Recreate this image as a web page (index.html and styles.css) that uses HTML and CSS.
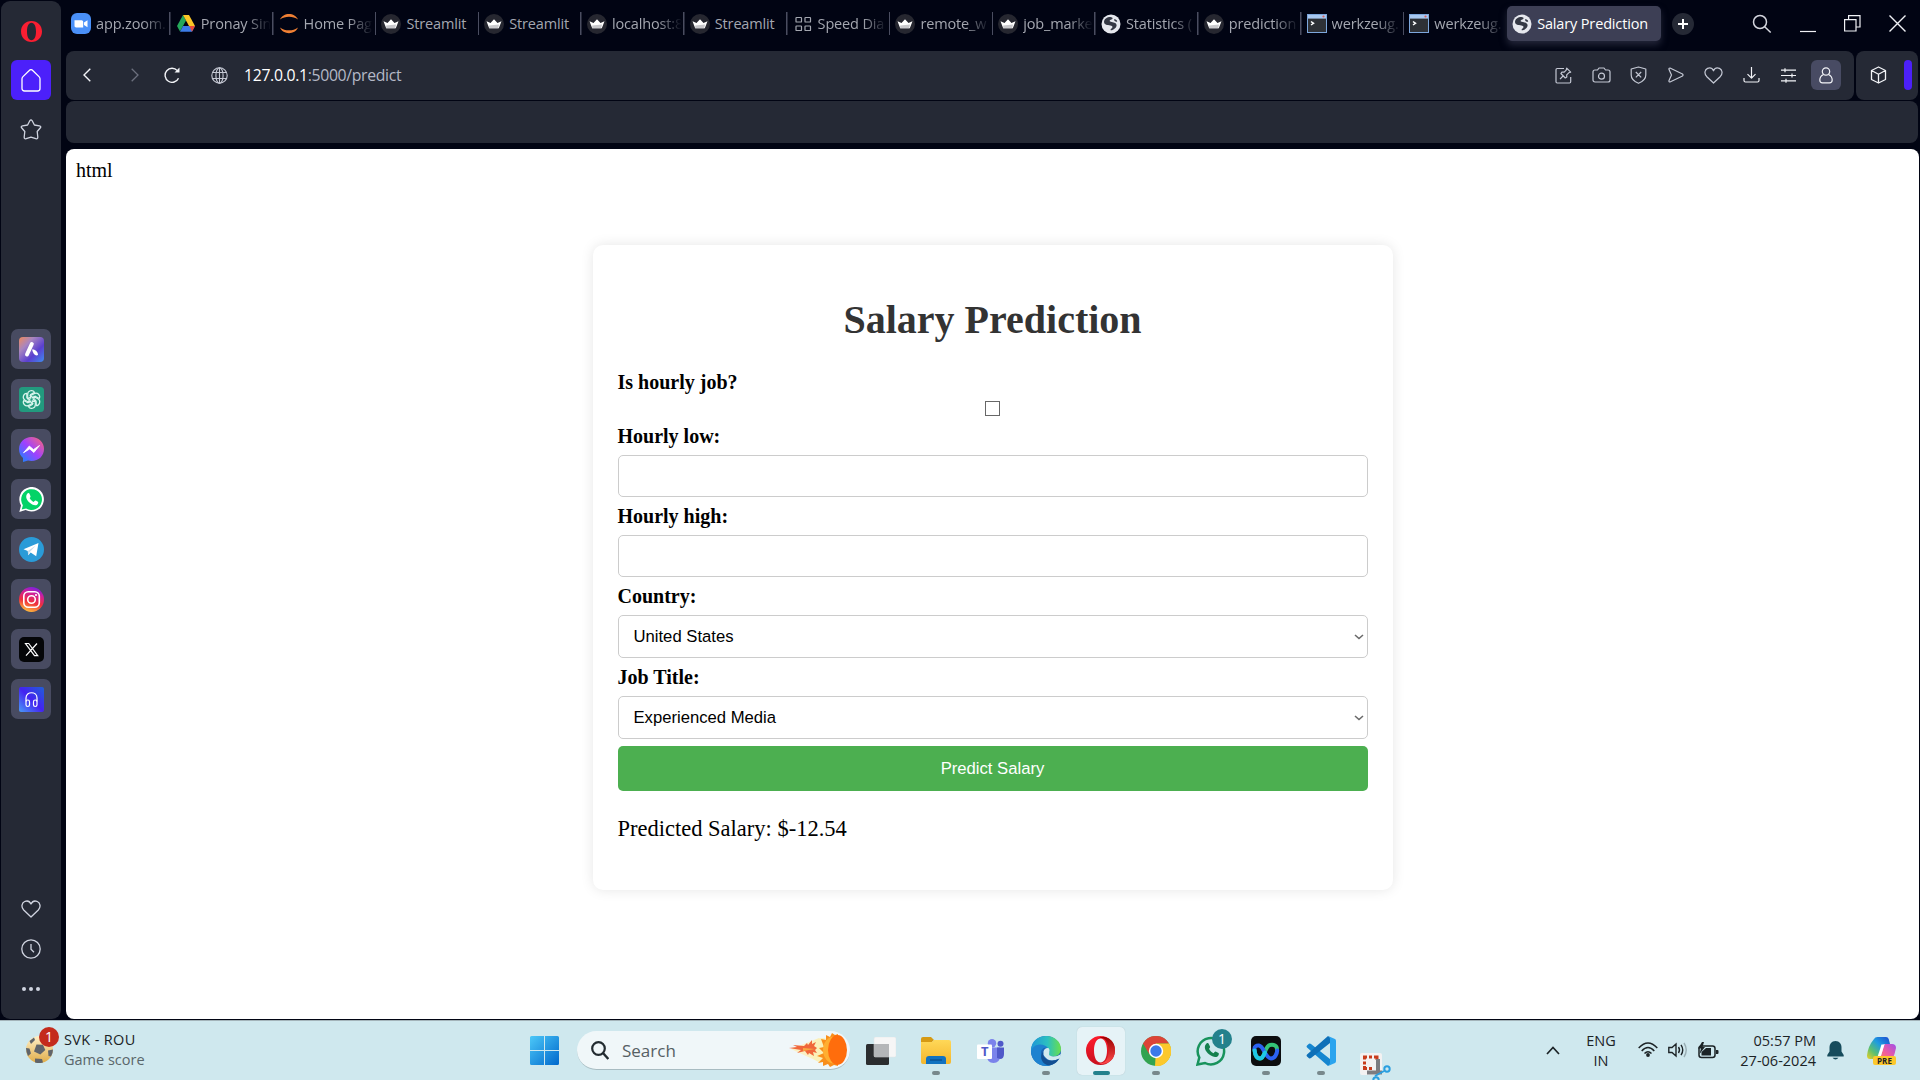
FILE: index.html
```html
<!DOCTYPE html>
<html lang="en">
<head>
<meta charset="utf-8">
<title>Salary Prediction</title>
<link rel="stylesheet" href="styles.css">
</head>
<body>
<svg class="defs" width="0" height="0" aria-hidden="true">
  <defs>
    <linearGradient id="g-aria" x1="0" y1="0" x2="1" y2="1"><stop offset="0" stop-color="#f08a5a"/><stop offset=".3" stop-color="#a886c0"/><stop offset=".65" stop-color="#5a3fd0"/><stop offset="1" stop-color="#3f8cf0"/></linearGradient>
    <linearGradient id="g-msg" x1="0" y1="1" x2="1" y2="0"><stop offset="0" stop-color="#0a8cff"/><stop offset=".5" stop-color="#a040ff"/><stop offset="1" stop-color="#ff6a70"/></linearGradient>
    <linearGradient id="g-insta" x1=".3" y1="1" x2=".6" y2="0"><stop offset="0" stop-color="#ffc63c"/><stop offset=".4" stop-color="#f0303c"/><stop offset=".75" stop-color="#d0209a"/><stop offset="1" stop-color="#7a20e0"/></linearGradient>
    <linearGradient id="g-head" x1="0" y1="1" x2="1" y2="0"><stop offset="0" stop-color="#4a9cf8"/><stop offset=".5" stop-color="#4422f0"/><stop offset="1" stop-color="#2060d8"/></linearGradient>
    <linearGradient id="g-win" x1="0" y1="0" x2="1" y2="1"><stop offset="0" stop-color="#4cc8f8"/><stop offset="1" stop-color="#0068cc"/></linearGradient>
    <linearGradient id="g-edge" x1="0" y1="0" x2="1" y2="0"><stop offset="0" stop-color="#1e96d8"/><stop offset=".55" stop-color="#2cc0c0"/><stop offset="1" stop-color="#6ae04c"/></linearGradient>
    <linearGradient id="g-folder" x1="0" y1="0" x2="0" y2="1"><stop offset="0" stop-color="#ffd858"/><stop offset="1" stop-color="#f4b62c"/></linearGradient>
    <linearGradient id="g-webex" x1="0" y1="0" x2="1" y2="0"><stop offset="0" stop-color="#20c4e8"/><stop offset=".5" stop-color="#2458f0"/><stop offset="1" stop-color="#3cd06c"/></linearGradient>
    <linearGradient id="g-cop1" x1="1" y1="0" x2="0" y2="1"><stop offset="0" stop-color="#1c48d0"/><stop offset=".4" stop-color="#1e9ce0"/><stop offset=".7" stop-color="#5cc070"/><stop offset="1" stop-color="#f0d020"/></linearGradient>
    <linearGradient id="g-cop2" x1="1" y1="0" x2="0" y2="1"><stop offset="0" stop-color="#a050e8"/><stop offset=".5" stop-color="#f05ca0"/><stop offset="1" stop-color="#ff9040"/></linearGradient>
    <linearGradient id="g-ball" x1="0" y1="0" x2="0" y2="1"><stop offset="0" stop-color="#fff0c8"/><stop offset="1" stop-color="#e0ac48"/></linearGradient>
    <linearGradient id="g-op" x1="0" y1="0" x2="0" y2="1"><stop offset="0" stop-color="#ff1b2d"/><stop offset="1" stop-color="#c8101e"/></linearGradient>
    <linearGradient id="g-op2" x1="0" y1="0" x2="0" y2="1"><stop offset="0" stop-color="#9c0000"/><stop offset="1" stop-color="#ff4b4b"/></linearGradient>
    <symbol id="crown" viewBox="0 0 20 20"><circle cx="10" cy="10" r="10" fill="#262730"/><path d="M2.500 7.200l4 1.800L10 5.200l3.500 3.800 4-1.800-2.700 7H5.200z" fill="#fff"/><path d="M5.200 11.500l9.800-1-.8 3.700h-9z" fill="#c8c8cc"/></symbol>
    <symbol id="world" viewBox="0 0 20 20"><circle cx="10" cy="10" r="9.500" fill="#e6e8ee"/><path d="M3 8c0-3 3-5 6.500-5 2.500.2 2.700 1.900.9 2.600-2 .7-2.500 1.600-.6 2.200 2.300.6 5.500.8 5.800 3.300.2 2.600-2.800 4.600-4.900 5.200-1.600.3-1.400-1.200-.2-1.900 1.300-.7 1.400-2.100-.2-2.700C8.100 11 3.300 11.500 3 8zM13 5.500c1.500-.6 3 .7 3.200 2-1 .8-3.400-.6-3.200-2z" fill="#343844"/></symbol>
    <symbol id="console" viewBox="0 0 20 19"><rect x=".5" y=".5" width="19" height="18" fill="#2e3136" stroke="#7da7dc"/><rect x="1" y="1" width="18" height="3.600" fill="#a8c8f0"/><circle cx="16.500" cy="2.500" r="1.100" fill="#d8605c"/><path d="M4 7.500l2.500 1.800L4 11" stroke="#fff" stroke-width="1.500" fill="none"/></symbol>
    <symbol id="heart" viewBox="0 0 20 18"><path d="M10 17L2.700 10C-.2 6.800.8 2.800 3.700 1.500 6.300.4 8.800 1.500 10 4c1.200-2.500 3.700-3.600 6.300-2.500 2.900 1.300 3.900 5.300 1 8.500z" fill="none" stroke="currentColor" stroke-width="1.300" stroke-linejoin="round"/></symbol>
  </defs>
</svg>

<div class="browser">
  <aside class="sidebar">
    <div class="side-logo"><svg width="21" height="21" viewBox="0 0 21 21"><path fill-rule="evenodd" fill="#fa1e32" d="M10.500 0C16.500 0 21 4.500 21 10.500S16.500 21 10.500 21 0 16.500 0 10.500 4.500 0 10.500 0zm0 1.800C7.500 1.800 6 5.500 6 10.500s1.500 8.700 4.500 8.700S15 15.500 15 10.500s-1.500-8.700-4.500-8.700z"/></svg></div>
    <div class="side-home"><svg width="20" height="23" viewBox="0 0 20 23"><path d="M1 9.800c0-1 .4-1.600 1-2.200l6.300-6.100c1-1 2.400-1 3.400 0L18 7.600c.6.600 1 1.200 1 2.200v9.700c0 1.500-1 2.500-2.500 2.500h-13C2 22 1 21 1 19.500z" fill="none" stroke="#fff" stroke-width="1.300"/></svg></div>
    <div class="side-star"><svg width="22" height="21" viewBox="0 0 22 21"><path d="M9.800 1.800q1.200-2 2.400 0l2.200 4.200 5 .8q2.300.5.8 2.200l-3 3.500.6 5.500q.1 2.300-2 1.700L11 18.200l-4.800 1.500q-2.100.6-2-1.700l.6-5.500-3-3.500Q.3 7.300 2.600 6.800l5-.8z" fill="none" stroke="#d0d4e0" stroke-width="1.300" stroke-linejoin="round"/></svg></div>
    <nav class="side-apps">
      <div class="app"><svg width="25" height="25" viewBox="0 0 25 25"><rect width="25" height="25" rx="4" fill="url(#g-aria)"/><path d="M12.800 7L8 17.500" stroke="#fff" stroke-width="4" stroke-linecap="round"/><path d="M13 12.500c3-.5 6 2 6 5.500-2.500 1.300-4.700-.5-6-5.500z" fill="#fff"/></svg></div>
      <div class="app"><svg width="25" height="25" viewBox="0 0 25 25"><rect width="25" height="25" rx="3.500" fill="#229a7e"/><g fill="none" stroke="#d8f4ec" stroke-width="1.200"><path id="petal" d="M12.500 9.500L8.700 11.700V7.300c0-4 5.200-4.800 6.800-2l-4 2.400v4"/><use href="#petal" transform="rotate(60 12.500 12.500)"/><use href="#petal" transform="rotate(120 12.500 12.500)"/><use href="#petal" transform="rotate(180 12.500 12.500)"/><use href="#petal" transform="rotate(240 12.500 12.500)"/><use href="#petal" transform="rotate(300 12.500 12.500)"/></g></svg></div>
      <div class="app"><svg width="25" height="25" viewBox="0 0 25 25"><path d="M12.500 0C19.500 0 25 5 25 12s-5.500 12-12.500 12c-1.300 0-2.500-.2-3.500-.5L4 25v-4C1.500 19 0 15.800 0 12 0 5 5.500 0 12.500 0z" fill="url(#g-msg)"/><path d="M4.500 15.800L10.300 9l4.200 3.600 6-4.100-5.600 7-4.200-3.600z" fill="#fff" stroke="#fff" stroke-width=".8"/></svg></div>
      <div class="app"><svg width="25" height="25" viewBox="0 0 25 25"><path d="M.3 25L2 18.500A12.300 12.300 0 1 1 6.600 23z" fill="#fff"/><path d="M2.700 22.600l1.200-4.300a10.400 10.400 0 1 1 3.200 3.100z" fill="#04d367"/><path d="M8.500 6.500c.8-.8 1.700-.4 2 .3l1 2.400c.2.700-.3 1.200-.9 1.900 1 1.900 2.200 3 4.100 3.900.8-.9 1.200-1.800 2.100-1.400l2.100 1.100c.8.400.1 2.300-.8 3-1.600 1.100-4.200.6-7-1.600-3.600-2.900-5.200-7-2.600-9.600z" fill="#fff"/></svg></div>
      <div class="app"><svg width="25" height="25" viewBox="0 0 25 25"><circle cx="12.500" cy="12.500" r="12.500" fill="#2a9bd8"/><path d="M4.500 12.200L19.500 6l-2.300 13.200-5.500-3.600-2.500 2.600-.4-4.300z" fill="#fff"/><path d="M8.800 14l8-5.600-6.200 6.800-1.400 3z" fill="#c8dceb"/></svg></div>
      <div class="app"><svg width="25" height="25" viewBox="0 0 25 25"><circle cx="12.500" cy="12.500" r="12.500" fill="url(#g-insta)"/><g fill="none" stroke="#fff" stroke-width="1.600"><rect x="4.800" y="4.800" width="15.500" height="15.500" rx="4.500"/><circle cx="12.500" cy="12.500" r="3.800"/></g><circle cx="17" cy="8" r="1.100" fill="#fff"/></svg></div>
      <div class="app"><svg width="25" height="25" viewBox="0 0 25 25"><rect width="25" height="25" rx="5" fill="#050608"/><path d="M6.500 6.500h3.200l9 12.200h-3.200zM18 6.500L7 18.700" fill="none" stroke="#fff" stroke-width="1.200"/></svg></div>
      <div class="app"><svg width="25" height="25" viewBox="0 0 25 25"><rect width="25" height="25" rx="2" fill="url(#g-head)"/><g fill="none" stroke="#fff" stroke-width="1.200"><path d="M7 14.500V11c0-7 11-7 11 0v3.500"/><rect x="7" y="13" width="3.500" height="6.500" rx="1.700"/><rect x="14.500" y="13" width="3.500" height="6.500" rx="1.700"/></g></svg></div>
    </nav>
    <div class="side-bottom">
      <svg width="20" height="18"><use href="#heart"/></svg>
      <svg width="20" height="20" viewBox="0 0 20 20"><g fill="none" stroke="currentColor" stroke-width="1.300"><circle cx="10" cy="10" r="9.200"/><path d="M10 5v5.300l3 3"/></g></svg>
      <svg width="20" height="6" viewBox="0 0 20 6" fill="currentColor"><circle cx="3" cy="3" r="2"/><circle cx="10" cy="3" r="2"/><circle cx="17" cy="3" r="2"/></svg>
    </div>
  </aside>

  <div class="window">
    <header class="tabbar">
      <div class="tab"><svg width="20" height="21" viewBox="0 0 20 21"><rect width="20" height="21" rx="6" fill="#4a90f8"/><path d="M3.500 7.300h7c1 0 1.700.7 1.700 1.700v5.500h-7c-1 0-1.700-.7-1.700-1.700zM13 9.500l3.500-2.300v7L13 12z" fill="#fff"/></svg><span>app.zoom.</span></div>
      <div class="tab"><svg width="20" height="18" viewBox="0 0 20 18"><path d="M7 0L1 11l3 5.500L10 5.500z" fill="#25a85a"/><path d="M7 0h6l6 11h-6z" fill="#fcc726"/><path d="M4 16.800L7 11h12l-3 5.800z" fill="#3c7ce8"/><path d="M13.300 11H19l-3 5.700z" fill="#ea4a3a"/></svg><span>Pronay Sin</span></div>
      <div class="tab"><svg width="20" height="21" viewBox="0 0 20 21"><path d="M1 6.500C4-1 16-1 19 6.500 14 2.700 6 2.700 1 6.500zM1 14.500c3 7.500 15 7.500 18 0-5 3.800-13 3.800-18 0z" fill="#f08034"/></svg><span>Home Pag</span></div>
      <div class="tab"><svg width="20" height="20"><use href="#crown"/></svg><span class="full">Streamlit</span></div>
      <div class="tab"><svg width="20" height="20"><use href="#crown"/></svg><span class="full">Streamlit</span></div>
      <div class="tab"><svg width="20" height="20"><use href="#crown"/></svg><span>localhost:8</span></div>
      <div class="tab"><svg width="20" height="20"><use href="#crown"/></svg><span class="full">Streamlit</span></div>
      <div class="tab"><svg width="20" height="20" viewBox="0 0 20 20"><g fill="none" stroke="#a4a7b0" stroke-width="1.200"><rect x="3" y="3.500" width="5.500" height="4.500" rx=".6"/><rect x="12" y="3.500" width="5.500" height="4.500" rx=".6"/><rect x="3" y="12" width="5.500" height="4.500" rx=".6"/><rect x="12" y="12" width="5.500" height="4.500" rx=".6"/></g></svg><span>Speed Dia</span></div>
      <div class="tab"><svg width="20" height="20"><use href="#crown"/></svg><span>remote_w</span></div>
      <div class="tab"><svg width="20" height="20"><use href="#crown"/></svg><span>job_marke</span></div>
      <div class="tab"><svg width="20" height="20"><use href="#world"/></svg><span>Statistics (</span></div>
      <div class="tab"><svg width="20" height="20"><use href="#crown"/></svg><span>prediction</span></div>
      <div class="tab"><svg width="20" height="19"><use href="#console"/></svg><span>werkzeug.</span></div>
      <div class="tab"><svg width="20" height="19"><use href="#console"/></svg><span>werkzeug.</span></div>
      <div class="tab active"><svg width="20" height="20"><use href="#world"/></svg><span class="full">Salary Prediction</span></div>
      <div class="newtab"><svg width="10" height="10" viewBox="0 0 10 10"><path d="M5 0v10M0 5h10" stroke="#fff" stroke-width="2"/></svg></div>
      <div class="winctl">
        <svg width="20" height="20" viewBox="0 0 20 20"><circle cx="8" cy="8" r="6.500" fill="none" stroke="#d4d6de" stroke-width="1.500"/><path d="M12.700 12.700l6 5.800" stroke="#d4d6de" stroke-width="1.500"/></svg>
        <svg width="16" height="18" viewBox="0 0 16 18"><path d="M0 16.500h16" stroke="#f0f1f5" stroke-width="1.200"/></svg>
        <svg width="17" height="17" viewBox="0 0 17 17"><path d="M.6 4.600h11.400v11.400H.6zM4.600 4.600v-4H16v11.400h-4" fill="none" stroke="#f0f1f5" stroke-width="1.200"/></svg>
        <svg width="17" height="17" viewBox="0 0 17 17"><path d="M.5.5l16 16M16.500.5l-16 16" stroke="#f0f1f5" stroke-width="1.400"/></svg>
      </div>
    </header>

    <div class="toolbar">
      <div class="address">
        <svg class="ic-back" width="8" height="14" viewBox="0 0 8 14"><path d="M7.300.7L1 7l6.300 6.300" fill="none" stroke="#f2f3f7" stroke-width="1.400"/></svg>
        <svg class="ic-fwd" width="8" height="14" viewBox="0 0 8 14"><path d="M.7.700L7 7 .7 13.300" fill="none" stroke="#6c707e" stroke-width="1.300"/></svg>
        <svg class="ic-reload" width="17" height="16" viewBox="0 0 17 16"><path d="M14.500 11.200A7 7 0 1 1 13.300 3.600" fill="none" stroke="#f2f3f7" stroke-width="1.400"/><path d="M10.500 5.500h5V.6z" fill="#f2f3f7"/></svg>
        <svg class="ic-globe" width="17" height="17" viewBox="0 0 17 17"><g fill="none" stroke="#c6c9d4" stroke-width="1.100"><circle cx="8.500" cy="8.500" r="7.700"/><ellipse cx="8.500" cy="8.500" rx="3.600" ry="7.700"/><path d="M8.500.8v15.400M1.500 5.500h14M1.500 11.500h14"/></g></svg>
        <span class="url"><b>127.0.0.1</b>:5000/predict</span>
        <div class="actions">
          <div><svg width="17" height="17" viewBox="0 0 17 17"><path d="M9 1.500H2.200c-.7 0-1.200.5-1.200 1.200v12.100c0 .7.500 1.200 1.200 1.200h12.300c.7 0 1.200-.5 1.200-1.200V10M11.700 1.200l4 4-2 .6-2 2 .1 2.200-1.500 1-4.400-4.500 1-1.400h2.300l2-2zM8 9l-3 3.200"/></svg></div>
          <div><svg width="19" height="16" viewBox="0 0 19 16"><path d="M3 3h2.500L7 1h5l1.500 2H16c1.300 0 2 .8 2 2v8c0 1.300-.8 2-2 2H3c-1.300 0-2-.8-2-2V5c0-1.200.8-2 2-2z"/><circle cx="9.500" cy="9.200" r="3"/></svg></div>
          <div><svg width="17" height="18" viewBox="0 0 17 18"><path d="M8.500 1l7.300 2v6c0 4-3 6.500-7.300 8.300C4.200 15.500 1.200 13 1.200 9V3zM5.800 6l5.400 5.400M11.200 6l-5.400 5.400"/></svg></div>
          <div><svg width="16" height="16" viewBox="0 0 16 16"><path d="M2 1l12.500 6q1 1 0 2L2 15q-1.300 0-1-1.500L3.500 8 1 2.500Q.7 1 2 1z"/></svg></div>
          <div><svg width="19" height="17"><use href="#heart"/></svg></div>
          <div class="bright"><svg width="17" height="16" viewBox="0 0 17 16"><path d="M8.500 0v11M4.500 7.200l4 4 4-4M1 11v2.500c0 1 .5 1.500 1.500 1.500h12c1 0 1.500-.5 1.500-1.500V11"/></svg></div>
          <div class="bright"><svg width="17" height="15" viewBox="0 0 17 15"><path d="M1 2.200h15M1 7.500h15M1 12.800h15M5 .2v4M12 5.500v4M6 10.800v4"/></svg></div>
          <div class="profile bright"><svg width="14" height="17" viewBox="0 0 14 17"><circle cx="7" cy="4.500" r="3.700"/><path d="M4.500 7.500C1.800 8.800.8 11 .8 13c0 1.800 1 2.800 2.700 2.800h7c1.700 0 2.700-1 2.700-2.800 0-2-1-4.200-3.700-5.500"/></svg></div>
        </div>
      </div>
      <div class="extras">
        <svg width="17" height="18" viewBox="0 0 17 18"><path d="M8.500 1l7 3.500v9l-7 3.500-7-3.500v-9zM1.500 4.500l7 3.700 7-3.700M8.500 8.200V17" fill="none" stroke="#f2f3f7" stroke-width="1.300" stroke-linejoin="round"/></svg>
        <i class="grip"></i>
      </div>
    </div>

    <div class="bookmarks"></div>

    <main class="page">
      <p class="stray">html</p>
      <section class="card">
        <h1>Salary Prediction</h1>
        <form>
          <label for="hourly" class="first">Is hourly job?</label>
          <div class="check"><input type="checkbox" id="hourly"></div>
          <label for="low" class="tight">Hourly low:</label>
          <input type="text" id="low" class="field">
          <label for="high">Hourly high:</label>
          <input type="text" id="high" class="field">
          <label>Country:</label>
          <div class="select"><span>United States</span><svg width="10" height="6" viewBox="0 0 10 6"><path d="M1 1l4 3.500L9 1" fill="none" stroke="#6a6a6a" stroke-width="1.600"/></svg></div>
          <label>Job Title:</label>
          <div class="select"><span>Experienced Media</span><svg width="10" height="6" viewBox="0 0 10 6"><path d="M1 1l4 3.500L9 1" fill="none" stroke="#6a6a6a" stroke-width="1.600"/></svg></div>
          <button type="button">Predict Salary</button>
        </form>
        <p class="result">Predicted Salary: $-12.54</p>
      </section>
    </main>
  </div>
</div>

<footer class="taskbar">
  <div class="widget">
    <div class="ball">
      <svg width="27" height="27" viewBox="0 0 27 27"><circle cx="13.500" cy="13.500" r="13.500" fill="url(#g-ball)"/><path d="M10.500 8.500l6.500.2 2.300 5.300-5 4.500L8 15.500zM0 12l3.500.5 1.500 5-3 2.500Q0 16 0 12zM9 22.500l7 .5 1 3.500q-4 1.300-8 0zM22 14.500l5-1q0 4-2 7l-2.500-.5zM3.500 5L8 1.500l1 2.500-4 4z" fill="#60646a"/></svg>
      <span class="badge red">1</span>
    </div>
    <div class="widget-text"><span class="match">SVK - ROU</span><span class="muted">Game score</span></div>
  </div>

  <div class="center">
    <svg width="29" height="29" viewBox="0 0 29 29"><path d="M1.500 0H14v14H0V1.500Q0 0 1.500 0zM15 0h12.500Q29 0 29 1.500V14H15zM0 15h14v14H1.500Q0 29 0 27.500zM15 15h14v12.500q0 1.500-1.500 1.500H15z" fill="url(#g-win)"/></svg>
    <div class="search">
      <svg width="18" height="19" viewBox="0 0 18 19"><circle cx="7.500" cy="7.500" r="6.300" fill="none" stroke="#222b30" stroke-width="2.200"/><path d="M12 12l5.300 6" stroke="#222b30" stroke-width="2.400"/></svg>
      <span>Search</span>
      <svg width="58" height="34" viewBox="0 0 58 34"><path d="M2 16L30 5v24z" fill="#fbf0c4"/><ellipse cx="33" cy="17" rx="12" ry="12" fill="#fbf0b8"/><path d="M0 15l8-1-4-2 11 1 3-3 1 2 4-5v4l4-2-2 4 3 2-2 2 2 3-4-1 1 4-5-3-1 2-3-4-8 2 4-3z" fill="#f0673a"/><path d="M14 15l12 1-12 2z" fill="#f9a840"/><path d="M32 6l5 1 0-5 4 2 2-4 3 2 3-1v32l-4-1-4 2-2-3-5 2 0-4-5 1 5-5-6-2 7-3-5-5 5-1z" fill="#f98f1c"/><ellipse cx="45" cy="17" rx="11" ry="13.500" fill="#ffae30"/><ellipse cx="48.500" cy="17" rx="9.500" ry="15" fill="#ff6d0c"/></svg>
    </div>
    <div class="pins">
      <div class="pin"><svg width="30" height="28" viewBox="0 0 30 28"><rect x="0" y="7" width="23" height="21" rx="1.500" fill="#2b2d2f"/><rect x="8" y="0" width="22" height="20" rx="1.500" fill="#f6f6f6" stroke="#e2e4e5" stroke-width=".5"/><path d="M8 7h15v13H8z" fill="#b4b6b8"/></svg></div>
      <div class="pin run"><svg width="30" height="27" viewBox="0 0 30 27"><path d="M0 2Q0 0 2 0h8l3 3-3 3H0z" fill="#d69a14"/><path d="M0 5h11l2-2h15q2 0 2 2v20q0 2-2 2H2q-2 0-2-2z" fill="url(#g-folder)"/><path d="M5 27v-5q0-3 3-3h14q3 0 3 3v5z" fill="#1272c0"/><path d="M9 23h12" stroke="#0a4a88" stroke-width="1.200"/></svg></div>
      <div class="pin"><svg width="28" height="24" viewBox="0 0 28 24"><circle cx="15" cy="4.200" r="4.200" fill="#7b83eb"/><circle cx="23.500" cy="4.800" r="3" fill="#5059c9"/><path d="M10 8.500h13V17q0 7-6.500 7T10 17z" fill="#7b83eb"/><path d="M20 8.500h7V15q0 5-4 5l-3-1z" fill="#5059c9"/><rect x="0" y="5.500" width="15" height="14.500" rx="1" fill="#fff"/></svg><b class="teams-t">T</b></div>
      <div class="pin run"><svg width="30" height="30" viewBox="0 0 30 30"><circle cx="15" cy="15" r="15" fill="#1a64b4"/><path d="M0 13C1 5 7 0 15 0c9 0 15 6 15 13 0 5-4 7.500-8 7.500-3 0-5-1.500-4-3 1.500-3-.5-6.500-5-7C8 10 3 12 0 17z" fill="url(#g-edge)"/><path d="M0 15C3 7 13 7 17 12c-4-1-7 1-7 5 0 6 5 11 12 11-3 1.700-5 2-7 2C6 30 0 23 0 15z" fill="#1e82d0"/><path d="M12.500 15.500q1-4 5-3.500 2 2 .8 5-1.500 2.500 3.700 3.500 4 .2 8-2.500-.5 2.700-1.500 4.500Q18 28 12.500 19z" fill="#d2e9ef"/><path d="M12 16c-1 6 6 12 16.500 6.500C25 28 20 30 16 29 9 26 9 19 12 16z" fill="#134f92"/></svg></div>
      <div class="pin run current"><svg width="29" height="29" viewBox="0 0 29 29"><path fill-rule="evenodd" fill="url(#g-op)" d="M14.500 0a14.500 14.500 0 1 0 0 29 14.500 14.500 0 1 0 0-29zm0 2.500c4 0 6.500 5 6.500 12s-2.500 12-6.500 12S8 21.500 8 14.500s2.500-12 6.500-12z"/><path d="M9 5.500Q11 2 15 2c5 0 7.500 6 7.500 12.500S20 27 15 27q-4 0-6-3.500 5 7 13 3 7-4 7-12t-6-12Q15-2 9 5.500z" fill="url(#g-op2)"/></svg></div>
      <div class="pin run"><svg width="30" height="30" viewBox="0 0 30 30"><circle cx="15" cy="15" r="15" fill="#32a350"/><path d="M15 15L28 7.500A15 15 0 0 1 14 30z" fill="#fcc82c"/><path d="M2 7.500A15 15 0 0 1 28 7.500H15L8.500 18.500z" fill="#dc4437"/><path d="M28 7.500H15v6l6.500 4.500L14 30A15 15 0 0 0 28 7.500z" fill="#fcc82c"/><circle cx="15" cy="15" r="7.200" fill="#fff"/><circle cx="15" cy="15" r="5.700" fill="#3b79e8"/></svg></div>
      <div class="pin"><svg width="30" height="30" viewBox="0 0 30 30"><path d="M1.500 28.500l1.800-7A13.200 13.200 0 1 1 9 27z" fill="none" stroke="#18935c" stroke-width="2.500"/><path d="M10.500 7.500c1-.8 2-.4 2.300.4l1.200 2.600c.3.800-.2 1.500-1 2.300 1.200 2.200 2.500 3.500 4.700 4.500.8-1 1.400-2.100 2.400-1.600l2.400 1.300c1 .5.100 2.700-1 3.400-1.900 1.300-5 .7-8.200-1.800-4.200-3.400-6-8.100-2.800-11.100z" fill="#14804e"/></svg><span class="badge teal">1</span></div>
      <div class="pin run"><svg width="30" height="30" viewBox="0 0 30 30"><rect width="30" height="30" rx="5" fill="#0c0d0f"/><g fill="none" stroke-width="4" stroke-linecap="round"><path d="M3.500 14c.5 5 2.500 8.500 5.500 8.500 5 0 4.500-12.500 10-13.500 4-.6 7 .4 7 4.500" stroke="#34c478"/><path d="M3.500 13.500c-.5-3 2-4.300 4.500-4 5 .8 6 12.500 12 13 4 0 6-5 6.200-8" stroke="#2b62f2"/><path d="M3.600 14.500c.6 5 2.600 8 5.400 8 2.500 0 3.800-3 5-6" stroke="#1ec8e6"/></g></svg></div>
      <div class="pin run"><svg width="30" height="30" viewBox="0 0 30 30"><path d="M1 9.500l2-1.700q1-.6 2 .2L24 23v5.500L22 30 1 11.500q-1-1 0-2z" fill="#1586d0"/><path d="M1 20.500l2 1.700q1 .6 2-.2L24 7V1.500L22 0 1 18.500q-1 1 0 2z" fill="#0f70b8"/><path d="M22 0l7 3q1 .5 1 2v20q0 1.500-1 2l-7 3q2-1 2-3V3q0-2-2-3z" fill="#2ba4ee"/></svg></div>
      <div class="pin snip"><svg width="31" height="28" viewBox="0 0 31 28"><rect width="22" height="22" rx="2" fill="#f4f2f2"/><path d="M14 4h3v3M12 4H9M7 4H4.500v2.500M4.500 8.500v3M4.500 13v2.500H7M9 15.500h3" fill="none" stroke="#c83c1c" stroke-width="3"/><path d="M18 6v15M7 19.500h15" stroke="#7c7c80" stroke-width="4"/><path d="M15 23l9-5" stroke="#2a9fe0" stroke-width="2"/><circle cx="27" cy="16" r="2.700" fill="none" stroke="#2a9fe0" stroke-width="2"/><circle cx="16" cy="27" r="2.700" fill="none" stroke="#2a9fe0" stroke-width="2"/></svg></div>
    </div>
  </div>

  <div class="tray">
    <svg width="14" height="9" viewBox="0 0 14 9"><path d="M1 8l6-6.500L13 8" fill="none" stroke="#1c2326" stroke-width="1.700"/></svg>
    <div class="lang"><span>ENG</span><span>IN</span></div>
    <div class="status">
      <svg width="20" height="15" viewBox="0 0 20 15"><g fill="none" stroke="#1c2326" stroke-width="1.500"><path d="M.7 6Q10-4 19.300 6M3.700 9Q10 2 16.300 9M6.500 11.500q3.500-3.500 7 0"/></g><circle cx="10" cy="13" r="1.900" fill="#1c2326"/></svg>
      <svg width="20" height="16" viewBox="0 0 20 16"><g fill="none" stroke="#1c2326" stroke-width="1.400"><path d="M.8 5.500H4L8 2v12l-4-3.500H.8zM10.500 5q2 3 0 6M13 2.800q3.500 5.200 0 10.400"/><path d="M16 1q4.500 7 0 14" stroke="#9aaeb4"/></g></svg>
      <svg width="21" height="17" viewBox="0 0 21 17"><rect x="1" y="4" width="16" height="11.500" rx="2.500" fill="none" stroke="#1c2326" stroke-width="1.500"/><path d="M18 8h1.500q1 0 1 1v2q0 1-1 1H18z" fill="#1c2326"/><path d="M8 6h5v7.500H3.500V10z" fill="#1c2326"/><path d="M4 0L0 6.500h3L1.500 12 7 5H4.500L6 0z" fill="#1c2326"/></svg>
    </div>
    <div class="clock"><span>05:57 PM</span><span>27-06-2024</span></div>
    <svg class="bell" width="17" height="19" viewBox="0 0 17 19"><path d="M8.500 0C4.500 0 2.500 3 2.500 6.500v4L.3 14v1.500h16.400V14l-2.200-3.500v-4C14.500 3 12.500 0 8.500 0zM5.500 16.800q3 3.500 6 0z" fill="#174c5c"/></svg>
    <div class="copilot">
      <svg width="29" height="28" viewBox="0 0 29 28"><path d="M7 2q1-2 3.500-2H19q2 0 2.700 2l1.300 5h-5q-2 0-3 3l-3 10q-1 2-3 2H3q-3 0-3-3.500Q1 9 7 2z" fill="url(#g-cop1)"/><path d="M18 7h7q4 0 4 4-1 6-4 12-1 2-3 2h-9q-2 0-3-3 3 0 4-3l2.500-9Q17 8 18 7z" fill="url(#g-cop2)"/><path d="M14.500 7.500h3L13.500 20h-3z" fill="#fff"/></svg>
      <b>PRE</b>
    </div>
  </div>
</footer>
</body>
</html>
```
FILE: styles.css
```css
* { box-sizing: border-box; }

body {
  margin: 0;
  width: 1920px;
  height: 1080px;
  overflow: hidden;
  display: flex;
  flex-direction: column;
  background: #010413;
  font-family: "Open Sans", "Noto Sans", sans-serif;
  font-size: 14.5px;
}

svg { display: block; flex: none; }
.defs { position: absolute; }
p, h1 { margin: 0; }

/* Browser frame */
.browser {
  height: 1020px;
  flex: none;
  display: flex;
  gap: 5px;
  padding: 1px 1px 1.500px;
}

.sidebar {
  width: 60px;
  flex: none;
  border-radius: 9px;
  background: #252935;
  display: flex;
  flex-direction: column;
  align-items: center;
  color: #d0d4e0;
}
.side-logo { margin-top: 20px; }
.side-home {
  width: 40px;
  height: 40px;
  margin-top: 18px;
  border-radius: 6px;
  background: #4c20fa;
  display: grid;
  place-items: center;
}
.side-star { margin-top: 19px; }
.side-apps {
  margin-top: 189px;
  display: flex;
  flex-direction: column;
  gap: 10px;
}
.app {
  width: 40px;
  height: 40px;
  border-radius: 7px;
  background: #484b61;
  display: grid;
  place-items: center;
}
.side-bottom {
  margin-top: auto;
  padding-bottom: 27px;
  display: flex;
  flex-direction: column;
  align-items: center;
  gap: 21px;
}
.side-bottom svg:last-child { margin-top: 6px; }

.window {
  flex: 1;
  min-width: 0;
  display: flex;
  flex-direction: column;
}

/* Tabs */
.tabbar {
  height: 50px;
  flex: none;
  display: flex;
  padding-top: 5px;
}
.tab {
  width: 102.800px;
  height: 35px;
  flex: none;
  display: flex;
  align-items: center;
  padding-left: 5px;
  gap: 5px;
  color: #a4a7b0;
  background: linear-gradient(#4a4d60, #4a4d60) right 6px / 1.500px 23px no-repeat;
}
.tab:first-child { width: 104.800px; }
.tab span {
  flex: 1;
  white-space: nowrap;
  letter-spacing: -0.150px;
  mask-image: linear-gradient(90deg, #000 62%, transparent 96%);
}
.tab .full { mask-image: none; }
.tab:nth-child(14) { background: none; }
.tab.active {
  width: 154px;
  border-radius: 5px;
  background: #3d3f55;
  box-shadow: 0 4px 7px rgba(70, 72, 95, .5);
  color: #fff;
}
.newtab {
  width: 22px;
  height: 22px;
  margin: 7px 0 0 11px;
  border-radius: 50%;
  background: #252935;
  display: grid;
  place-items: center;
}
.winctl {
  height: 35px;
  margin-left: auto;
  padding-right: 13px;
  display: flex;
  align-items: center;
  gap: 28px;
}

/* Address row */
.toolbar {
  height: 49px;
  flex: none;
  display: flex;
  gap: 2px;
}
.address, .extras, .bookmarks {
  border-radius: 8px;
  background: #252935;
}
.address {
  width: 1788px;
  display: flex;
  align-items: center;
  padding: 0 13px 1px 17px;
}
.ic-fwd { margin-left: 40px; }
.ic-reload { margin-left: 25px; }
.ic-globe { margin-left: 30px; }
.url {
  margin-left: 16px;
  font-size: 15.800px;
  letter-spacing: -0.330px;
  color: #b4b8c6;
  white-space: nowrap;
}
.url b { font-weight: 400; color: #fff; }
.actions {
  margin-left: auto;
  display: flex;
  gap: 7.500px;
}
.actions div {
  width: 30px;
  height: 30px;
  border-radius: 6px;
  display: grid;
  place-items: center;
  color: #c4c8d4;
}
.actions svg { fill: none; stroke: currentColor; stroke-width: 1.200; stroke-linejoin: round; }
.actions .bright { color: #f2f3f7; }
.actions .profile { background: #484b63; }
.extras {
  width: 62px;
  display: flex;
  align-items: center;
  justify-content: space-between;
  padding: 0 6px 1px 14px;
}
.grip {
  width: 8px;
  height: 30px;
  border-radius: 4px;
  background: #4c20fa;
}
.bookmarks {
  height: 42px;
  flex: none;
  margin: 1px 1px 6px 0;
}

/* Web page */
.page {
  flex: 1;
  border-radius: 8px;
  background: #fff;
  padding: 10px;
  color: #000;
  font: 20px/23px "Liberation Serif", serif;
}
.card {
  width: 800px;
  height: 645px;
  margin: 63px auto 0;
  padding: 31px 25px 0;
  border-radius: 10px;
  background: #fff;
  box-shadow: 0 0 12.500px rgba(0, 0, 0, .1);
}
.card h1 {
  height: 86px;
  text-align: center;
  font-size: 40px;
  line-height: 88px;
  color: #333;
}
.card form { display: flex; flex-direction: column; }
.card label { font-weight: 700; line-height: 38px; }
.card .first { height: 38px; line-height: 40px; }
.card .tight { margin-top: 1px; }
.check {
  height: 16px;
  display: flex;
  justify-content: center;
  align-items: flex-end;
}
.check input {
  appearance: none;
  margin: 0;
  width: 15px;
  height: 15px;
  border: 1.500px solid #676767;
  background: #fff;
}
.field, .select {
  border: 1px solid #ccc;
  border-radius: 5px;
  background: #fff;
}
.field { height: 42px; padding: 0 15px; margin: 0; }
.select {
  height: 43px;
  display: flex;
  align-items: center;
  justify-content: space-between;
  padding: 0 3px 0 15px;
  font: 16.660px "Liberation Sans", sans-serif;
}
.card button {
  height: 45px;
  margin: 7px 0 0;
  border: 0;
  border-radius: 5px;
  background: #4caf50;
  color: #fff;
  font: 16.660px "Liberation Sans", sans-serif;
}
.result {
  margin-top: 25px;
  font-size: 22.500px;
  line-height: 25px;
}

/* Taskbar */
.taskbar {
  height: 60px;
  flex: none;
  display: flex;
  border-top: 1px solid #a4b4ba;
  background: #cfe8ee;
  color: #1c2326;
}
.widget {
  width: 530px;
  flex: none;
  display: flex;
  padding: 9px 0 0 26px;
  gap: 11px;
}
.ball { position: relative; padding-top: 6px; }
.badge {
  position: absolute;
  width: 20px;
  height: 20px;
  border-radius: 50%;
  color: #fff;
  font-size: 14px;
  line-height: 20px;
  text-align: center;
}
.badge.red { left: 13px; top: -3px; background: #c42b1c; }
.badge.teal { right: 3px; top: 2px; background: #24818c; }
.widget-text, .clock, .lang {
  display: flex;
  flex-direction: column;
  line-height: 20px;
  white-space: nowrap;
}
.match { letter-spacing: .350px; }
.muted { color: #5a666a; }

.center { display: flex; align-items: center; }
.search {
  width: 273px;
  height: 39px;
  margin: 0 7px 0 18px;
  padding: 0 3px 0 14px;
  border-radius: 20px;
  border-bottom: 1px solid #a8bcc2;
  background: #f0f7f9;
  display: flex;
  align-items: center;
  color: #566064;
  font-size: 17px;
}
.search span { margin-left: 13px; flex: 1; }
.pins { display: flex; gap: 7px; }
.pin {
  position: relative;
  width: 48px;
  height: 48px;
  border-radius: 5px;
  display: grid;
  place-items: center;
}
.pin.run::after {
  content: "";
  position: absolute;
  left: 20px;
  bottom: 0;
  width: 8px;
  height: 4px;
  border-radius: 2px;
  background: #78888c;
}
.pin.current { background: #e6f3f7; box-shadow: 0 0 1px #a8bcc2; }
.pin.current svg { margin-right: 1px; }
.pin.current::after { left: 16px; width: 17px; background: #24818c; }
.teams-t {
  position: absolute;
  left: 14px;
  top: 15px;
  font-size: 13px;
  line-height: 18px;
  color: #5059c9;
}
.snip { place-items: end center; height: 54px; margin-bottom: -6px; }
.snip svg { margin-right: 2px; }

.tray { margin-left: auto; display: flex; align-items: center; padding-right: 24px; }
.lang { margin-left: 26px; width: 30px; align-items: center; }
.status { display: flex; gap: 10px; margin-left: 22px; }
.clock { width: 90px; margin-left: 7px; align-items: flex-end; }
.bell { margin-left: 11px; }
.copilot { position: relative; margin-left: 23px; }
.copilot b {
  position: absolute;
  left: 6px;
  bottom: 0;
  width: 23px;
  height: 9px;
  border-radius: 2px;
  background: #fcc82c;
  font-size: 8px;
  line-height: 9px;
  text-align: center;
}
```
